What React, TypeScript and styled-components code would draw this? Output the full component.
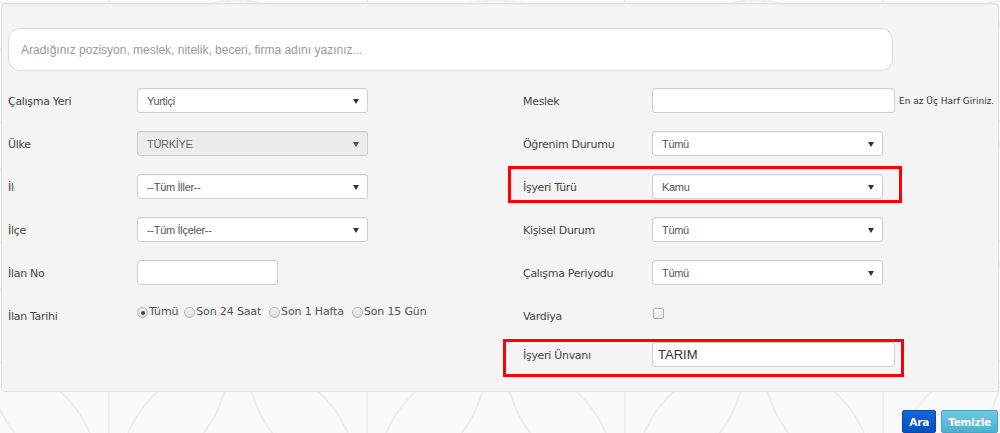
import React from 'react'
import styled, { createGlobalStyle, css } from 'styled-components'

const GlobalStyle = createGlobalStyle`
  html, body {
    margin: 0;
    padding: 0;
  }
  body {
    width: 1000px;
    height: 433px;
    overflow: hidden;
    background-color: #fafafa;
    background-image:
      radial-gradient(circle at 50% 0%, transparent 118px, #eeeeee 119px, #eeeeee 120px, transparent 121px),
      radial-gradient(circle at 0% 100%, transparent 118px, #efefef 119px, #efefef 120px, transparent 121px),
      radial-gradient(circle at 100% 100%, transparent 118px, #efefef 119px, #efefef 120px, transparent 121px),
      linear-gradient(90deg, transparent 128px, #f0f0f0 128px, #f0f0f0 130px, transparent 130px);
    background-size: 258px 120px;
    background-position: -20px 0;
    font-family: Verdana, 'DejaVu Sans', sans-serif;
  }
`

const Panel = styled.div`
  margin: 3px 1px 0 1px;
  padding: 24px 6px 15px 6px;
  background: #f4f4f4;
  border: 1px solid #e3e3e3;
  border-radius: 4px;
  box-shadow: inset 0 1px 1px rgba(0, 0, 0, 0.04);
`

const SearchInput = styled.input`
  display: block;
  box-sizing: border-box;
  width: 885px;
  height: 43px;
  margin: 0 0 8px 0;
  padding: 0 12px;
  border: 1px solid #dcdcdc;
  border-radius: 12px;
  background: #fff;
  font-family: 'Liberation Sans', Arial, sans-serif;
  font-size: 12px;
  color: #555;
  outline: none;

  &::placeholder {
    color: #9a9a9a;
  }
`

const Form = styled.div`
  display: grid;
  grid-template-columns: 500px 1fr;
`

const Column = styled.div<{ $right?: boolean }>`
  display: flex;
  flex-direction: column;
  ${(p) =>
    p.$right &&
    css`
      padding-left: 15px;
    `}
`

const Row = styled.div<{ $pull?: number }>`
  position: relative;
  display: flex;
  align-items: center;
  height: 43px;
  margin-top: ${(p) => (p.$pull ? -p.$pull : 0)}px;
`

const Highlight = styled.div<{ $left: number; $top: number; $width: number; $height: number }>`
  position: absolute;
  left: ${(p) => p.$left}px;
  top: ${(p) => p.$top}px;
  width: ${(p) => p.$width}px;
  height: ${(p) => p.$height}px;
  box-sizing: border-box;
  border: 3px solid #ff0000;
  pointer-events: none;
`

const Label = styled.label`
  width: 129px;
  flex: none;
  padding-top: 1px;
  font-size: 11px;
  letter-spacing: -0.3px;
  color: #444;
  line-height: 1;
`

const SelectBox = styled.div<{ $disabled?: boolean }>`
  position: relative;
  box-sizing: border-box;
  width: 231px;
  height: 25px;
  padding: 0 24px 0 9px;
  display: flex;
  align-items: center;
  border: 1px solid #cfcfcf;
  border-radius: 3px;
  background: ${(p) => (p.$disabled ? '#ececec' : '#fff')};
  box-shadow: inset 0 1px 1px rgba(0, 0, 0, 0.05);
  font-family: 'Liberation Sans', Arial, sans-serif;
  font-size: 11px;
  letter-spacing: -0.3px;
  color: ${(p) => (p.$disabled ? '#666' : '#555')};

  &::after {
    content: '';
    position: absolute;
    right: 8px;
    top: 10px;
    border-left: 3.5px solid transparent;
    border-right: 3.5px solid transparent;
    border-top: 5px solid ${(p) => (p.$disabled ? '#555' : '#333')};
  }
`

const TextInput = styled.input<{ $width: number }>`
  box-sizing: border-box;
  width: ${(p) => p.$width}px;
  height: 25px;
  padding: 0 5px;
  border: 1px solid #cfcfcf;
  border-radius: 3px;
  background: #fff;
  box-shadow: inset 0 1px 1px rgba(0, 0, 0, 0.05);
  font-family: 'Liberation Sans', Arial, sans-serif;
  font-size: 13px;
  color: #333;
  outline: none;
`

const Hint = styled.span`
  margin-left: 4px;
  font-size: 9px;
  color: #333;
  white-space: nowrap;
`

const RadioGroup = styled.div`
  display: flex;
  align-items: center;
  padding-bottom: 8px;
`

const RadioItem = styled.label`
  display: flex;
  align-items: center;
  font-size: 11px;
  letter-spacing: -0.15px;
  color: #555;
  white-space: nowrap;

  & + & {
    margin-left: 8px;
  }
  &:nth-child(2) {
    margin-left: 6px;
  }
`

const RadioDot = styled.span<{ $checked?: boolean }>`
  position: relative;
  box-sizing: border-box;
  width: 11px;
  height: 11px;
  margin-right: 1px;
  margin-top: 2px;
  border-radius: 50%;
  border: 1px solid #b5b5b5;
  background: linear-gradient(#f2f2f2, #dcdcdc);

  ${(p) =>
    p.$checked &&
    css`
      &::after {
        content: '';
        position: absolute;
        left: 2.5px;
        top: 2.5px;
        width: 4px;
        height: 4px;
        border-radius: 50%;
        background: #444;
      }
    `}
`

const CheckBox = styled.span`
  box-sizing: border-box;
  width: 11px;
  height: 11px;
  margin-left: 1px;
  margin-top: -4px;
  border: 1px solid #b0b0b0;
  border-radius: 2px;
  background: linear-gradient(#fafafa, #e6e6e6);
`

const Footer = styled.div`
  display: flex;
  justify-content: flex-end;
  gap: 5px;
  margin-top: 18px;
  padding-right: 2px;
`

const Button = styled.button<{ $variant: 'primary' | 'info' }>`
  height: 23px;
  padding: 0 6px;
  border-radius: 2px;
  font-family: Verdana, 'DejaVu Sans', sans-serif;
  font-weight: bold;
  font-size: 10.5px;
  letter-spacing: -0.2px;
  color: #fff;
  cursor: pointer;
  ${(p) =>
    p.$variant === 'primary'
      ? css`
          background: linear-gradient(#1566d6, #0150c4);
          border: 1px solid #0a47a6;
        `
      : css`
          background: linear-gradient(#70c8e2, #4cb0d0);
          border: 1px solid #46a6c6;
        `}
`

const Select = ({ value, disabled }: { value: string; disabled?: boolean }) => (
  <SelectBox $disabled={disabled}>{value}</SelectBox>
)

const dateOptions = ['Tümü', 'Son 24 Saat', 'Son 1 Hafta', 'Son 15 Gün']

export default function App() {
  return (
    <>
      <GlobalStyle />
      <Panel>
        <SearchInput placeholder="Aradığınız pozisyon, meslek, nitelik, beceri, firma adını yazınız..." />
        <Form>
          <Column>
            <Row>
              <Label>Çalışma Yeri</Label>
              <Select value="Yurtiçi" />
            </Row>
            <Row>
              <Label>Ülke</Label>
              <Select value="TÜRKİYE" disabled />
            </Row>
            <Row>
              <Label>İl</Label>
              <Select value="--Tüm İller--" />
            </Row>
            <Row>
              <Label>İlçe</Label>
              <Select value="--Tüm İlçeler--" />
            </Row>
            <Row>
              <Label>İlan No</Label>
              <TextInput $width={141} />
            </Row>
            <Row>
              <Label>İlan Tarihi</Label>
              <RadioGroup>
                {dateOptions.map((o, i) => (
                  <RadioItem key={o}>
                    <RadioDot $checked={i === 0} />
                    {o}
                  </RadioItem>
                ))}
              </RadioGroup>
            </Row>
          </Column>
          <Column $right>
            <Row>
              <Label>Meslek</Label>
              <TextInput $width={243} />
              <Hint>En az Üç Harf Giriniz.</Hint>
            </Row>
            <Row>
              <Label>Öğrenim Durumu</Label>
              <Select value="Tümü" />
            </Row>
            <Row>
              <Highlight $left={-15} $top={1} $width={394} $height={37} />
              <Label>İşyeri Türü</Label>
              <Select value="Kamu" />
            </Row>
            <Row>
              <Label>Kişisel Durum</Label>
              <Select value="Tümü" />
            </Row>
            <Row>
              <Label>Çalışma Periyodu</Label>
              <Select value="Tümü" />
            </Row>
            <Row>
              <Label>Vardiya</Label>
              <CheckBox />
            </Row>
            <Row $pull={4}>
              <Highlight $left={-20} $top={6} $width={401} $height={38} />
              <Label>İşyeri Ünvanı</Label>
              <TextInput $width={243} defaultValue="TARIM" />
            </Row>
          </Column>
        </Form>
      </Panel>
      <Footer>
        <Button $variant="primary">Ara</Button>
        <Button $variant="info">Temizle</Button>
      </Footer>
    </>
  )
}
